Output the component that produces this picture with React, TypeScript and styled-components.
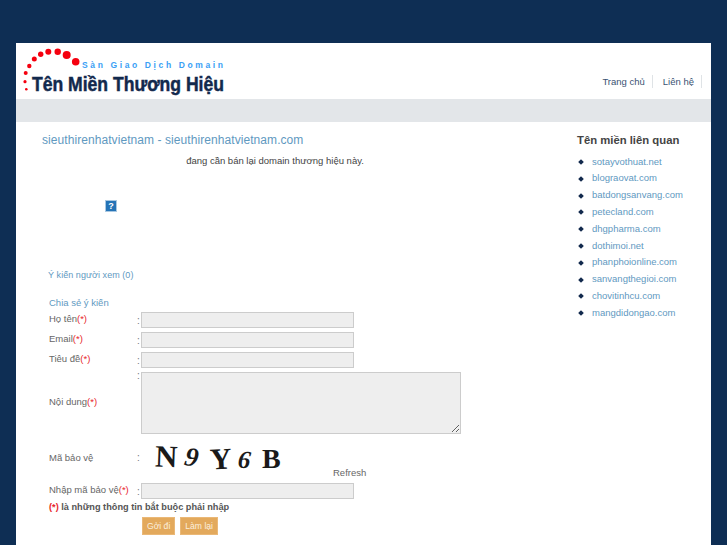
import styled, { createGlobalStyle } from "styled-components";

const links = [
  "sotayvothuat.net",
  "blograovat.com",
  "batdongsanvang.com",
  "petecland.com",
  "dhgpharma.com",
  "dothimoi.net",
  "phanphoionline.com",
  "sanvangthegioi.com",
  "chovitinhcu.com",
  "mangdidongao.com",
];

const dots = [
  [75.7, 61.7, 3.8],
  [66.7, 55, 4],
  [57.7, 51.7, 3.2],
  [48.3, 51.7, 3],
  [40.7, 54.3, 2.7],
  [34.3, 59, 2.5],
  [29.3, 66, 2.2],
  [25.7, 73, 2],
  [25, 81.7, 1.6],
  [26.3, 89.3, 1.3],
];

function Logo() {
  return (
    <LogoSvg viewBox="16 43 260 56" width="260" height="56">
      {dots.map(([cx, cy, r]) => (
        <circle key={cx + cy} cx={cx} cy={cy} r={r} fill="#f5000f" />
      ))}
      <text
        x="82"
        y="68"
        fontFamily="'Liberation Sans', sans-serif"
        fontSize="8.5"
        fontWeight="700"
        fill="#3aa0f5"
        textLength="141"
      >
        Sàn Giao Dịch Domain
      </text>
      <text
        x="32"
        y="90.5"
        fontFamily="'Liberation Sans', sans-serif"
        fontSize="21"
        fontWeight="700"
        fill="#12294d"
        stroke="#12294d"
        strokeWidth="0.5"
        textLength="192"
        lengthAdjust="spacingAndGlyphs"
      >
        Tên Miền Thương Hiệu
      </text>
    </LogoSvg>
  );
}

function Req() {
  return <Star>(*)</Star>;
}

export default function App() {
  return (
    <>
      <GlobalStyle />
      <Shell>
        <Header>
          <Logo />
          <Nav>
            <NavLink>Trang chủ</NavLink>
            <NavLink>Liên hệ</NavLink>
          </Nav>
        </Header>
        <GreyBar />
        <Main>
          <Content>
            <Title>sieuthirenhatvietnam - sieuthirenhatvietnam.com</Title>
            <Intro>đang cần bán lại domain thương hiệu này.</Intro>
            <HelpIcon>?</HelpIcon>
            <Comments>Ý kiến người xem (0)</Comments>
            <ShareTitle>Chia sẻ ý kiến</ShareTitle>
            <Form>
              <Label>
                Họ tên
                <Req />
              </Label>
              <Colon>:</Colon>
              <Field />
              <Label>
                Email
                <Req />
              </Label>
              <Colon>:</Colon>
              <Field />
              <Label>
                Tiêu đề
                <Req />
              </Label>
              <Colon>:</Colon>
              <Field />
              <Label $tall>
                Nội dung
                <Req />
              </Label>
              <Colon $top>:</Colon>
              <BigField />
              <Label $tall>Mã bảo vệ</Label>
              <Colon $tall>:</Colon>
              <CaptchaRow>
                <Captcha>
                  <CaptchaChar $rotate={2} $size={31} $gap={0} $drop={-1}>N</CaptchaChar>
                  <CaptchaChar $rotate={10} $size={27} $gap={8} $drop={-1} $italic>9</CaptchaChar>
                  <CaptchaChar $rotate={-3} $size={30} $gap={11} $drop={1}>Y</CaptchaChar>
                  <CaptchaChar $rotate={6} $size={25} $gap={6} $drop={2} $italic>6</CaptchaChar>
                  <CaptchaChar $rotate={0} $size={28} $gap={12} $drop={1}>B</CaptchaChar>
                </Captcha>
                <Refresh>Refresh</Refresh>
              </CaptchaRow>
              <Label>
                Nhập mã bảo vệ
                <Req />
              </Label>
              <Colon>:</Colon>
              <Field />
            </Form>
            <Note>
              <Star>(*)</Star> là những thông tin bắt buộc phải nhập
            </Note>
            <Buttons>
              <Button type="button">Gởi đi</Button>
              <Button type="button">Làm lại</Button>
            </Buttons>
          </Content>
          <Sidebar>
            <SideTitle>Tên miền liên quan</SideTitle>
            <LinkList>
              {links.map((link) => (
                <LinkItem key={link}>{link}</LinkItem>
              ))}
            </LinkList>
          </Sidebar>
        </Main>
      </Shell>
    </>
  );
}

const GlobalStyle = createGlobalStyle`
  html, body {
    margin: 0;
    height: 100%;
    overflow: hidden;
    background: #0e2e54;
    font-family: "Liberation Sans", Arial, sans-serif;
  }
`;

const Shell = styled.div`
  width: 695px;
  height: 502px;
  margin: 43px 0 0 16px;
  background: #fff;
  overflow: hidden;
`;

const Header = styled.header`
  height: 56px;
  display: flex;
  justify-content: space-between;
`;

const LogoSvg = styled.svg`
  display: block;
`;

const Nav = styled.nav`
  display: flex;
  align-items: flex-start;
  padding: 32px 9px 0 0;
`;

const NavLink = styled.a`
  height: 13px;
  padding: 0 7px 0 10px;
  border-right: 1px solid #dfe3e6;
  font-size: 9.5px;
  line-height: 13px;
  color: #3a5272;
`;

const GreyBar = styled.div`
  height: 23px;
  background: #e3e6e9;
`;

const Main = styled.main`
  display: flex;
`;

const Content = styled.div`
  width: 534px;
  padding: 11px 0 0 26px;
  box-sizing: border-box;
  font-size: 9.5px;
  color: #666;
`;

const Title = styled.h1`
  margin: 0;
  font-size: 12px;
  font-weight: 400;
  line-height: 14px;
  letter-spacing: 0.07px;
  color: #5f99bf;
`;

const Intro = styled.p`
  margin: 7px 0 0;
  width: 466px;
  text-align: center;
  font-size: 9.5px;
  line-height: 14px;
  color: #444;
`;

const HelpIcon = styled.div`
  width: 12px;
  height: 12px;
  margin: 32px 0 0 63px;
  background: #2473b6;
  border: 1px solid #a9c8e2;
  box-sizing: border-box;
  color: #fff;
  font-size: 9px;
  font-weight: 700;
  line-height: 10px;
  text-align: center;
`;

const Comments = styled.div`
  margin: 57px 0 0 6px;
  font-size: 9px;
  line-height: 12px;
  letter-spacing: 0.05px;
  color: #5f99bf;
`;

const ShareTitle = styled.div`
  margin: 16px 0 0 7px;
  font-size: 9.5px;
  line-height: 12px;
  color: #5f99bf;
`;

const Form = styled.div`
  display: grid;
  grid-template-columns: 88px 4px 1fr;
  grid-auto-rows: auto;
  row-gap: 4px;
  margin: 3px 0 0 7px;
`;

const Label = styled.div<{ $tall?: boolean }>`
  font-size: 9.5px;
  line-height: 13px;
  color: #666;
  align-self: ${(p) => (p.$tall ? "center" : "start")};
  margin-bottom: ${(p) => (p.$tall ? "3px" : "0")};
`;

const Star = styled.span`
  color: #e8262c;
`;

const Colon = styled.div<{ $top?: boolean; $tall?: boolean }>`
  font-size: 10px;
  line-height: 13px;
  color: #777;
  align-self: ${(p) => (p.$top ? "start" : "center")};
  margin-top: ${(p) => (p.$top ? "-3px" : "0")};
  margin-bottom: ${(p) => (p.$tall ? "3px" : "0")};
`;

const Field = styled.input`
  display: block;
  width: 213px;
  height: 16px;
  padding: 0;
  box-sizing: border-box;
  background: #eee;
  border: 1px solid #ccc;
  border-radius: 0;
  outline: none;
`;

const BigField = styled.textarea`
  display: block;
  width: 320px;
  height: 62px;
  padding: 0;
  box-sizing: border-box;
  background: #eee;
  border: 1px solid #ccc;
  border-radius: 0;
  outline: none;
`;

const CaptchaRow = styled.div`
  display: flex;
  align-items: flex-end;
  height: 41px;
  padding-left: 14px;
  box-sizing: border-box;
`;

const Captcha = styled.div`
  width: 178px;
  height: 30px;
  margin-bottom: 6px;
  display: flex;
  align-items: center;
`;

const CaptchaChar = styled.span<{
  $rotate: number;
  $size: number;
  $gap: number;
  $drop: number;
  $italic?: boolean;
}>`
  display: inline-block;
  margin-left: ${(p) => p.$gap}px;
  font-family: "Liberation Serif", serif;
  font-size: ${(p) => p.$size}px;
  font-weight: 700;
  font-style: ${(p) => (p.$italic ? "italic" : "normal")};
  line-height: 30px;
  color: #1a1a1a;
  transform: translateY(${(p) => p.$drop}px) rotate(${(p) => p.$rotate}deg);
`;

const Refresh = styled.a`
  font-size: 9.5px;
  line-height: 13px;
  color: #666;
`;

const Note = styled.div`
  margin: 2px 0 0 7px;
  font-size: 9.2px;
  font-weight: 700;
  line-height: 13px;
  color: #555;
`;

const Buttons = styled.div`
  display: flex;
  gap: 5px;
  margin: 3px 0 0 100px;
`;

const Button = styled.button`
  height: 18px;
  padding: 0 4px;
  background: #e3a95c;
  border: 1px solid #eab877;
  color: #fbeedd;
  font-family: inherit;
  font-size: 8.6px;
  line-height: 14px;
`;

const Sidebar = styled.aside`
  padding: 11px 0 0 27px;
`;

const SideTitle = styled.h2`
  margin: 0;
  font-size: 11.3px;
  font-weight: 700;
  line-height: 14px;
  color: #444;
`;

const LinkList = styled.ul`
  list-style: none;
  margin: 6.7px 0 0;
  padding: 0;
`;

const LinkItem = styled.li`
  position: relative;
  height: 16.8px;
  padding-left: 15px;
  font-size: 9.5px;
  line-height: 16.8px;
  color: #5f99bf;

  &::before {
    content: "";
    position: absolute;
    left: 2px;
    top: 6.4px;
    width: 4px;
    height: 4px;
    background: #12294d;
    transform: rotate(45deg);
  }
`;
